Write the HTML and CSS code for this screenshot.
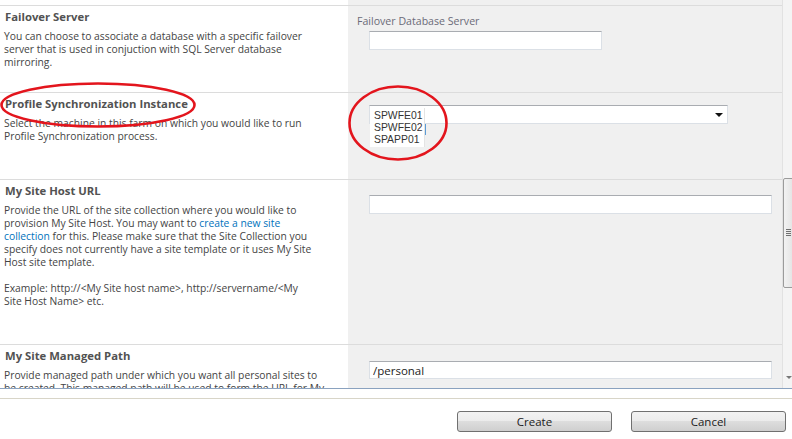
FILE: index.html
```html
<!DOCTYPE html>
<html>
<head>
<meta charset="utf-8">
<link rel="stylesheet" href="styles.css">
</head>
<body>
<div class="window">
  <div class="pane">
    <div class="form">
      <div class="row row-stub"><div class="cell-l"></div><div class="cell-r"></div></div>

      <div class="row row-failover">
        <div class="cell-l">
          <h3 class="title">Failover Server</h3>
          <p class="desc">You can choose to associate a database with a specific failover<br>server that is used in conjuction with SQL Server database<br>mirroring.</p>
        </div>
        <div class="cell-r">
          <div class="label">Failover Database Server</div>
          <div class="field field-failover"><input class="textbox tb-short" type="text"></div>
        </div>
      </div>

      <div class="row row-sync">
        <div class="cell-l">
          <h3 class="title">Profile Synchronization Instance</h3>
          <p class="desc">Select the machine in this farm on which you would like to run<br>Profile Synchronization process.</p>
        </div>
        <div class="cell-r">
          <div class="field field-sync">
            <div class="select">
              <span class="select-arrow"></span>
              <ul class="dropdown">
                <li>SPWFE01</li>
                <li>SPWFE02</li>
                <li>SPAPP01</li>
              </ul>
              <span class="caret"></span>
            </div>
          </div>
        </div>
      </div>

      <div class="row row-host">
        <div class="cell-l">
          <h3 class="title">My Site Host URL</h3>
          <p class="desc">Provide the URL of the site collection where you would like to<br>provision My Site Host. You may want to <a href="#">create a new site<br>collection</a> for this. Please make sure that the Site Collection you<br>specify does not currently have a site template or it uses My Site<br>Host site template.</p>
          <p class="desc desc-gap">Example: http://&lt;My Site host name&gt;, http://servername/&lt;My<br>Site Host Name&gt; etc.</p>
        </div>
        <div class="cell-r">
          <div class="field field-host"><input class="textbox tb-long" type="text"></div>
        </div>
      </div>

      <div class="row row-path">
        <div class="cell-l">
          <h3 class="title">My Site Managed Path</h3>
          <p class="desc">Provide managed path under which you want all personal sites to<br>be created. This managed path will be used to form the URL for My</p>
        </div>
        <div class="cell-r">
          <div class="field field-path"><input class="textbox tb-long tb-path" type="text" value="/personal"></div>
        </div>
      </div>
    </div>
    <div class="vscroll">
      <div class="thumb"><span class="grip"></span></div>
      <span class="down-arrow"></span>
    </div>
  </div>

  <div class="footer">
    <div class="footer-rule"></div>
    <div class="buttons">
      <button class="btn" type="button">Create</button>
      <button class="btn" type="button">Cancel</button>
    </div>
  </div>

  <svg class="marks" width="792" height="439" viewBox="0 0 792 439">
    <ellipse cx="98" cy="105" rx="96.5" ry="21.5" fill="none" stroke="#e3151d" stroke-width="2.6"/>
    <ellipse cx="398" cy="123" rx="48.5" ry="36.5" fill="none" stroke="#e3151d" stroke-width="2.6"/>
  </svg>
</div>
</body>
</html>
```

FILE: styles.css
```css
* { box-sizing: border-box; }
html, body { margin: 0; padding: 0; background: #fff; }
body { width: 792px; height: 439px; overflow: hidden; font-family: "Open Sans", "Noto Sans", sans-serif; }

.window { position: relative; width: 792px; height: 439px; background: #fff; }

.pane {
  display: flex;
  height: 389px;
  border-bottom: 1px solid #8aa2bf;
  overflow: hidden;
}
.form { width: 782px; flex: none; background: #f0f0f0; }

.row {
  display: grid;
  grid-template-columns: 348px 1fr;
  border-top: 1px solid #dcdcdc;
}
.row-stub { height: 5px; border-top: 0; }
.row-failover { height: 87px; }
.row-sync { height: 87px; }
.row-host { height: 165px; }
.row-path { height: 120px; }

.cell-l { background: #fff; padding: 4px 4px 0 4px; }
.cell-r { background: #f0f0f0; padding: 0 0 0 9px; }

.title {
  margin: 0;
  font-size: 11.3px;
  line-height: 14px;
  font-weight: bold;
  color: #525252;
  padding-left: 1px;
}
.desc {
  margin: 6px 0 0 0;
  font-size: 10.3px;
  line-height: 13px;
  color: #444;
  white-space: nowrap;
}
.desc-gap { margin-top: 13px; }
.desc a { color: #0072bc; text-decoration: none; }

.label {
  margin-top: 8px;
  font-size: 10.6px;
  line-height: 14px;
  color: #6b6b78;
}
.field { padding-left: 12px; }
.field-failover { margin-top: 3px; }
.field-sync { margin-top: 12px; }
.field-host { margin-top: 15px; }
.field-path { margin-top: 16px; }

.textbox {
  display: block;
  height: 19px;
  margin: 0;
  padding: 0 3px;
  background: #fff;
  border: 1px solid #dbe0e6;
  border-top-color: #a9acb1;
  font-family: "Open Sans", sans-serif;
  font-size: 11.5px;
  color: #222;
  outline: none;
}
.tb-short { width: 233px; }
.tb-long { width: 403px; }
.tb-path { height: 18px; padding-left: 3px; }

.select {
  position: relative;
  width: 359px;
  height: 19px;
  background: #fff;
  border: 1px solid #dbe0e6;
  border-top-color: #a9acb1;
}
.select-arrow {
  position: absolute;
  right: 4px;
  top: 7px;
  width: 0; height: 0;
  border-left: 4px solid transparent;
  border-right: 4px solid transparent;
  border-top: 4px solid #111;
}
.dropdown {
  position: absolute;
  left: 0;
  top: 2px;
  width: 55px;
  height: 39px;
  margin: 0;
  padding: 2px 0 0 4px;
  list-style: none;
  background: #fff;
  border-right: 1px solid #e4e4e4;
  font-family: "Liberation Sans", Arial, sans-serif;
  font-size: 10.4px;
  line-height: 12px;
  color: #333;
}
.caret {
  position: absolute;
  left: 55px;
  top: 18px;
  width: 1px;
  height: 11px;
  background: #5b9bd5;
}

.vscroll {
  position: relative;
  width: 10px;
  flex: none;
  background: #f4f4f4;
  border-left: 1px solid #e2e2e2;
}
.thumb {
  position: absolute;
  left: 0;
  top: 178px;
  width: 12px;
  height: 110px;
  border: 1px solid #9b9b9b;
  border-radius: 2px;
  background: linear-gradient(to right, #f2f2f2, #e2e2e2);
}
.grip {
  position: absolute;
  left: 2px;
  top: 50px;
  width: 5px;
  height: 7px;
  background: repeating-linear-gradient(to bottom, #707070 0 1px, transparent 1px 2px);
}
.down-arrow {
  position: absolute;
  left: 3px;
  top: 376px;
  width: 0; height: 0;
  border-left: 3px solid transparent;
  border-right: 3px solid transparent;
  border-top: 3px solid #777;
}

.footer { height: 49px; }
.footer-rule { margin-top: 9px; height: 1px; background: #d8d5c8; }
.buttons {
  display: flex;
  justify-content: flex-end;
  gap: 19px;
  padding: 12px 6px 0 0;
}
.btn {
  width: 155px;
  height: 21px;
  margin: 0;
  padding: 0;
  border: 1px solid #707070;
  border-radius: 3px;
  background: linear-gradient(to bottom, #f2f2f2 0%, #ebebeb 50%, #dddddd 50%, #cfcfcf 100%);
  font-family: "Open Sans", sans-serif;
  font-size: 11.5px;
  color: #1b1b1b;
  line-height: 19px;
}

.marks { position: absolute; left: 0; top: 0; pointer-events: none; }
```
